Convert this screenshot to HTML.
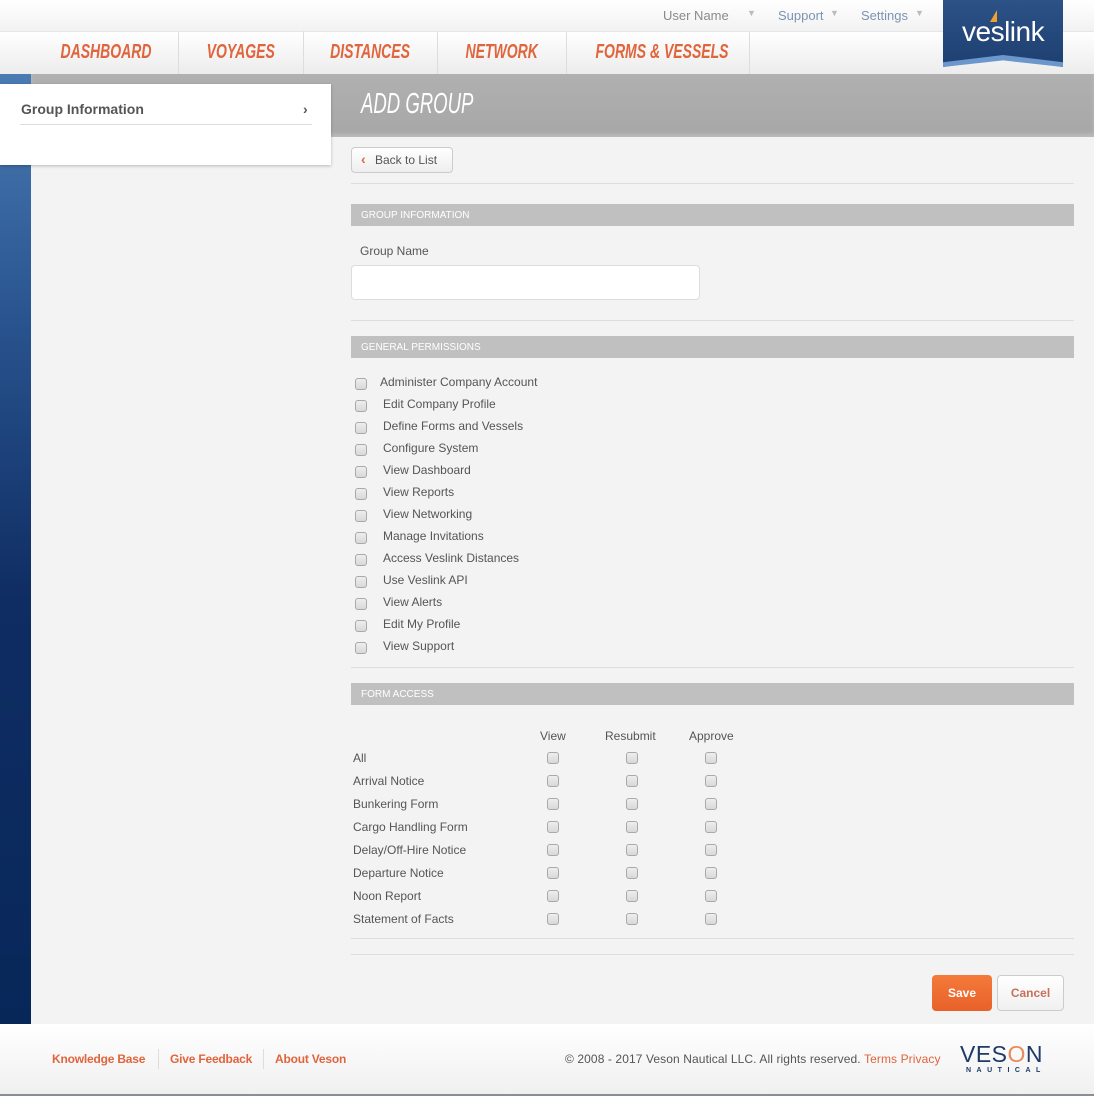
<!DOCTYPE html>
<html><head><meta charset="utf-8"><style>
*{margin:0;padding:0;box-sizing:border-box}
body{width:1094px;height:1096px;background:#f3f3f3;font-family:"Liberation Sans",sans-serif;position:relative;overflow:hidden;color:#555}
.a{position:absolute}
.cb{position:absolute;width:12px;height:12px;border:1px solid #a9a9a9;border-radius:3px;background:linear-gradient(#eee,#d8d8d8)}
.t{position:absolute;font-size:12px;color:#555;white-space:nowrap}
.sec{position:absolute;left:351px;width:723px;height:22px;background:#c0c0c0;color:#fff;font-size:10px;padding:6px 10px;text-transform:uppercase}
.hr{position:absolute;left:351px;width:723px;height:1px;background:#ddd}
.nav{position:absolute;top:31px;height:43px;font:italic bold 20px "Liberation Sans",sans-serif;color:#e0643c;line-height:43px;text-align:center;border-right:1px solid #ddd;white-space:nowrap}
.nav span{display:inline-block;transform:scaleX(0.7)}
.foot a{color:#e0643c;text-decoration:none}
</style></head><body>
<div class="a" style="left:0;top:0;width:1094px;height:31px;background:linear-gradient(#fff,#f2f2f2)"></div>
<div class="t" style="left:663px;top:8px;font-size:13px;color:#8a8a8a">User Name</div>
<div class="t" style="left:747px;top:8px;font-size:9px;color:#bbb">▼</div>
<div class="t" style="left:778px;top:8px;font-size:13px;color:#7b94b4">Support</div>
<div class="t" style="left:830px;top:8px;font-size:9px;color:#bbb">▼</div>
<div class="t" style="left:861px;top:8px;font-size:13px;color:#7b94b4">Settings</div>
<div class="t" style="left:915px;top:8px;font-size:9px;color:#bbb">▼</div>
<div class="a" style="left:0;top:31px;width:1094px;height:43px;background:linear-gradient(#fff,#ececec);border-top:1px solid #e6e6e6"></div>
<div class="nav" style="left:33px;width:146px"><span>DASHBOARD</span></div>
<div class="nav" style="left:179px;width:125px"><span>VOYAGES</span></div>
<div class="nav" style="left:304px;width:134px"><span>DISTANCES</span></div>
<div class="nav" style="left:438px;width:129px"><span>NETWORK</span></div>
<div class="nav" style="left:567px;width:183px"><span>FORMS &amp; VESSELS</span></div>
<div class="a" style="left:943px;top:0;width:120px;height:67px;background:linear-gradient(#2c5287,#1e3f70);clip-path:polygon(0 0,100% 0,100% 100%,50% 88%,0 100%)"></div>
<div class="a" style="left:943px;top:55px;width:120px;height:12px;background:#6b97cc;clip-path:polygon(0 60%,50% 0,100% 60%,100% 100%,50% 45%,0 100%)"></div>
<div class="t" style="left:962px;top:16px;font-size:28px;color:#fff;letter-spacing:-0.5px">veslink</div>
<div class="a" style="left:990px;top:10px;width:0;height:0;border-left:7px solid transparent;border-bottom:12px solid #f0a030"></div>
<div class="a" style="left:0;top:74px;width:31px;height:950px;background:linear-gradient(#4a7bb3 0%,#2a5590 25%,#0f2d63 55%,#082759 100%)"></div>
<div class="a" style="left:31px;top:74px;width:1063px;height:63px;background:linear-gradient(#b0b0b0,#a7a7a7);box-shadow:inset 0 -3px 4px #bdbdbd"></div>
<div class="t" style="left:361px;top:88px;font:italic 29px 'Liberation Sans',sans-serif;color:#fff;transform:scaleX(0.64);transform-origin:left center">ADD GROUP</div>
<div class="a" style="left:0;top:84px;width:331px;height:81px;background:#fff;box-shadow:0 1px 3px rgba(0,0,0,.25)"></div>
<div class="t" style="left:21px;top:101px;font-size:14px;font-weight:bold;color:#555">Group Information</div>
<div class="t" style="left:303px;top:101px;font-size:14px;font-weight:bold;color:#555">›</div>
<div class="a" style="left:20px;top:124px;width:292px;height:1px;background:#ddd"></div>
<div class="a" style="left:351px;top:147px;width:102px;height:26px;border:1px solid #ccc;border-radius:4px;background:linear-gradient(#fff,#eee)"></div>
<div class="t" style="left:361px;top:151px;font-size:14px;color:#e0643c;font-weight:bold">‹</div>
<div class="t" style="left:375px;top:153px;font-size:12px;color:#555">Back to List</div>
<div class="hr" style="top:183px"></div>
<div class="sec" style="top:204px">Group Information</div>
<div class="t" style="left:360px;top:244px">Group Name</div>
<div class="a" style="left:351px;top:265px;width:349px;height:35px;background:#fff;border:1px solid #ddd;border-radius:4px"></div>
<div class="hr" style="top:320px"></div>
<div class="sec" style="top:336px">General Permissions</div>
<div class="cb" style="left:355px;top:378px"></div><div class="t" style="left:380px;top:375px">Administer Company Account</div>
<div class="cb" style="left:355px;top:400px"></div><div class="t" style="left:383px;top:397px">Edit Company Profile</div>
<div class="cb" style="left:355px;top:422px"></div><div class="t" style="left:383px;top:419px">Define Forms and Vessels</div>
<div class="cb" style="left:355px;top:444px"></div><div class="t" style="left:383px;top:441px">Configure System</div>
<div class="cb" style="left:355px;top:466px"></div><div class="t" style="left:383px;top:463px">View Dashboard</div>
<div class="cb" style="left:355px;top:488px"></div><div class="t" style="left:383px;top:485px">View Reports</div>
<div class="cb" style="left:355px;top:510px"></div><div class="t" style="left:383px;top:507px">View Networking</div>
<div class="cb" style="left:355px;top:532px"></div><div class="t" style="left:383px;top:529px">Manage Invitations</div>
<div class="cb" style="left:355px;top:554px"></div><div class="t" style="left:383px;top:551px">Access Veslink Distances</div>
<div class="cb" style="left:355px;top:576px"></div><div class="t" style="left:383px;top:573px">Use Veslink API</div>
<div class="cb" style="left:355px;top:598px"></div><div class="t" style="left:383px;top:595px">View Alerts</div>
<div class="cb" style="left:355px;top:620px"></div><div class="t" style="left:383px;top:617px">Edit My Profile</div>
<div class="cb" style="left:355px;top:642px"></div><div class="t" style="left:383px;top:639px">View Support</div>
<div class="hr" style="top:667px"></div>
<div class="sec" style="top:683px">Form Access</div>
<div class="t" style="left:540px;top:729px">View</div>
<div class="t" style="left:605px;top:729px">Resubmit</div>
<div class="t" style="left:689px;top:729px">Approve</div>
<div class="t" style="left:353px;top:751px">All</div>
<div class="t" style="left:353px;top:774px">Arrival Notice</div>
<div class="t" style="left:353px;top:797px">Bunkering Form</div>
<div class="t" style="left:353px;top:820px">Cargo Handling Form</div>
<div class="t" style="left:353px;top:843px">Delay/Off-Hire Notice</div>
<div class="t" style="left:353px;top:866px">Departure Notice</div>
<div class="t" style="left:353px;top:889px">Noon Report</div>
<div class="t" style="left:353px;top:912px">Statement of Facts</div>
<div class="cb" style="left:547px;top:752px"></div><div class="cb" style="left:626px;top:752px"></div><div class="cb" style="left:705px;top:752px"></div>
<div class="cb" style="left:547px;top:775px"></div><div class="cb" style="left:626px;top:775px"></div><div class="cb" style="left:705px;top:775px"></div>
<div class="cb" style="left:547px;top:798px"></div><div class="cb" style="left:626px;top:798px"></div><div class="cb" style="left:705px;top:798px"></div>
<div class="cb" style="left:547px;top:821px"></div><div class="cb" style="left:626px;top:821px"></div><div class="cb" style="left:705px;top:821px"></div>
<div class="cb" style="left:547px;top:844px"></div><div class="cb" style="left:626px;top:844px"></div><div class="cb" style="left:705px;top:844px"></div>
<div class="cb" style="left:547px;top:867px"></div><div class="cb" style="left:626px;top:867px"></div><div class="cb" style="left:705px;top:867px"></div>
<div class="cb" style="left:547px;top:890px"></div><div class="cb" style="left:626px;top:890px"></div><div class="cb" style="left:705px;top:890px"></div>
<div class="cb" style="left:547px;top:913px"></div><div class="cb" style="left:626px;top:913px"></div><div class="cb" style="left:705px;top:913px"></div>
<div class="hr" style="top:938px"></div>
<div class="hr" style="top:954px"></div>
<div class="a" style="left:932px;top:975px;width:60px;height:36px;border-radius:4px;background:linear-gradient(#f47a3a,#e8612a);color:#fff;font-size:12px;font-weight:bold;text-align:center;line-height:36px">Save</div>
<div class="a" style="left:997px;top:975px;width:67px;height:36px;border-radius:4px;border:1px solid #ccc;background:linear-gradient(#fff,#f0f0f0);color:#c8705a;font-size:12px;font-weight:bold;text-align:center;line-height:34px">Cancel</div>
<div class="a foot" style="left:0;top:1024px;width:1094px;height:72px;background:linear-gradient(#fff,#f0f0f0);border-bottom:2px solid #8a8f96"></div>
<div class="t foot" style="left:52px;top:1052px;font-weight:bold;color:#e0643c;letter-spacing:-0.2px">Knowledge Base</div>
<div class="a" style="left:158px;top:1049px;width:1px;height:20px;background:#ddd"></div>
<div class="t foot" style="left:170px;top:1052px;font-weight:bold;color:#e0643c;letter-spacing:-0.2px">Give Feedback</div>
<div class="a" style="left:263px;top:1049px;width:1px;height:20px;background:#ddd"></div>
<div class="t foot" style="left:275px;top:1052px;font-weight:bold;color:#e0643c;letter-spacing:-0.2px">About Veson</div>
<div class="t" style="left:565px;top:1052px;color:#555;letter-spacing:0.1px">© 2008 - 2017 Veson Nautical LLC. All rights reserved. <span style="color:#e0643c">Terms Privacy</span></div>
<div class="t" style="left:960px;top:1041px;font-size:23px;color:#1e3a66;letter-spacing:0.5px">VES<span style="color:#e88a5a">O</span>N</div>
<div class="t" style="left:966px;top:1067px;font-size:7px;font-weight:bold;color:#1e3a66;letter-spacing:5.5px">NAUTICAL</div>
</body></html>
